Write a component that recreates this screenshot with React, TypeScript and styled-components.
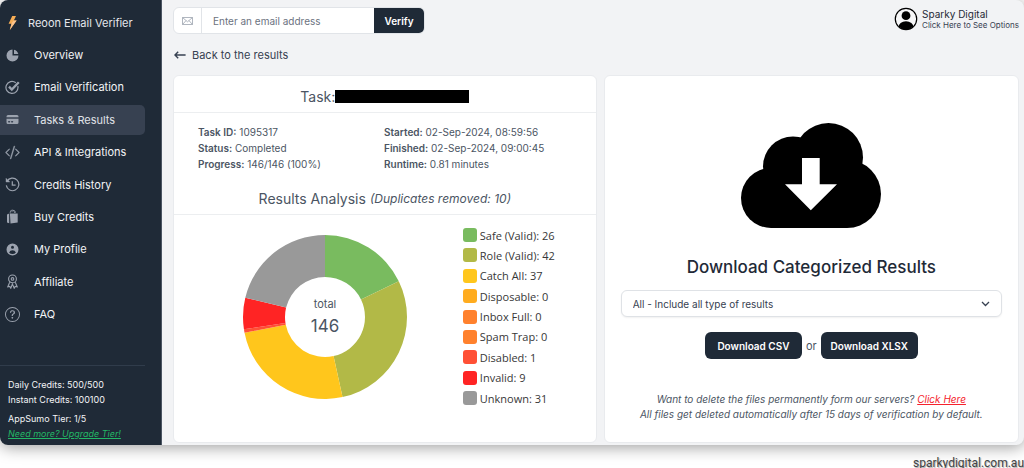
import React from 'react';
import styled, { createGlobalStyle } from 'styled-components';
import { HiChartPie, HiCreditCard, HiUserCircle } from 'react-icons/hi';
import { BsCodeSlash, BsQuestionCircle } from 'react-icons/bs';

const INK = '#1f2a37';

const GlobalStyle = createGlobalStyle`
  * { box-sizing: border-box; }
  body { margin: 0; background: #fff; font-family: Inter, "Liberation Sans", sans-serif; color: #4b5563; }
  button, input, select { font-family: inherit; }
  h1, h2, p, ul, dl, dd { margin: 0; padding: 0; }
  a { color: inherit; }
`;

const Page = styled.div`
  min-height: 100vh;
  display: flex;
  flex-direction: column;
`;

const Shell = styled.div`
  flex: 1;
  display: grid;
  grid-template-columns: 162px 1fr;
  background: #f2f3f5;
  border-radius: 8px;
  overflow: hidden;
  box-shadow: 0 2px 16px rgba(0, 0, 0, 0.4);
`;

const Sidebar = styled.aside`
  display: flex;
  flex-direction: column;
  background: ${INK};
  color: #e5e7eb;
  border-right: 1px solid #4b5563;
`;

const Brand = styled.div`
  display: flex;
  align-items: center;
  gap: 11px;
  height: 40px;
  padding: 5px 0 0 8px;
  font-size: 11px;
  white-space: nowrap;
`;

const Nav = styled.nav`
  flex: 1;
  display: flex;
  flex-direction: column;
  justify-content: space-between;
  padding: 0 16px 36px 0;
`;

const NavLink = styled.a<{ $active?: boolean }>`
  display: flex;
  align-items: center;
  gap: 14px;
  height: 30px;
  padding-left: 5px;
  border-radius: 0 5px 5px 0;
  background: ${(p) => (p.$active ? '#374151' : 'transparent')};
  color: ${(p) => (p.$active ? '#e0e3e8' : '#f3f4f6')};
  font-size: 11px;
  text-decoration: none;
  white-space: nowrap;
  svg { width: 15px; height: 15px; color: #9ca3af; flex: none; }
`;

const Credits = styled.div`
  margin-right: 16px;
  padding: 11px 0 4px 8px;
  border-top: 1px solid #303c4b;
  color: #f3f4f6;
  font-size: 9px;
  line-height: 15px;
  white-space: nowrap;
`;

const Tier = styled.div`
  margin-top: 4px;
`;

const UpgradeLink = styled.a`
  color: #22b866;
  font-style: italic;
`;

const Main = styled.main`
  display: flex;
  flex-direction: column;
  padding: 7px 5px 2px 11px;
`;

const TopBar = styled.header`
  display: flex;
  justify-content: space-between;
  align-items: flex-start;
`;

const VerifyForm = styled.form`
  display: flex;
  height: 27px;
  width: 252px;
  border: 1px solid #e1e4e8;
  border-radius: 6px;
  background: #fff;
  overflow: hidden;
`;

const MailLabel = styled.label`
  display: grid;
  place-items: center;
  width: 28px;
  border-right: 1px solid #e1e4e8;
  color: #9ca3af;
`;

const EmailInput = styled.input`
  flex: 1;
  min-width: 0;
  border: 0;
  padding: 0 11px;
  background: transparent;
  font-size: 10px;
  &::placeholder { color: #6b7280; opacity: 1; }
`;

const VerifyButton = styled.button`
  width: 50px;
  border: 0;
  padding: 0;
  background: ${INK};
  color: #fff;
  font-size: 10px;
  font-weight: 600;
`;

const Account = styled.button`
  display: flex;
  align-items: center;
  gap: 4px;
  border: 0;
  padding: 0;
  background: none;
  color: #374151;
  text-align: left;
`;

const AccountName = styled.span`
  display: block;
  font-size: 10px;
  line-height: 12px;
  color: ${INK};
`;

const AccountHint = styled.span`
  display: block;
  font-size: 8px;
  line-height: 10px;
`;

const BackLink = styled.a`
  display: flex;
  align-items: center;
  gap: 6px;
  align-self: flex-start;
  height: 41px;
  padding-left: 1px;
  color: #374151;
  font-size: 11px;
  text-decoration: none;
`;

const Panels = styled.div`
  flex: 1;
  display: grid;
  grid-template-columns: 51fr 50fr;
  gap: 7px;
`;

const Card = styled.section`
  display: flex;
  flex-direction: column;
  background: #fff;
  border: 1px solid #e9ebee;
  border-radius: 6px;
`;

const CardTitle = styled.h1`
  display: flex;
  justify-content: center;
  align-items: center;
  height: 37px;
  padding-top: 5px;
  border-bottom: 1px solid #eceef0;
  font-size: 14px;
  font-weight: 400;
`;

const Redacted = styled.span`
  width: 134px;
  height: 13px;
  background: #000;
`;

const Facts = styled.dl`
  display: grid;
  grid-template-columns: 186px 1fr;
  padding: 11px 24px 13px;
  font-size: 10px;
  line-height: 16px;
  dt, dd { display: inline; }
  dt { font-weight: 600; }
`;

const Analysis = styled.h2`
  display: flex;
  justify-content: center;
  align-items: center;
  gap: 4px;
  height: 30px;
  padding-bottom: 2px;
  border-bottom: 1px solid #eceef0;
  font-size: 14px;
  font-weight: 400;
  em { font-size: 12px; }
`;

const ChartRow = styled.div`
  display: flex;
  justify-content: center;
  gap: 48px;
  padding: 12px 0 35px 20px;
`;

const Donut = styled.svg`
  width: 180px;
  height: 180px;
  font-family: Inter, sans-serif;
`;

const Legend = styled.ul`
  display: flex;
  flex-direction: column;
  justify-content: space-between;
  padding-bottom: 1px;
  list-style: none;
`;

const LegendItem = styled.li`
  display: flex;
  align-items: center;
  gap: 3px;
  height: 16px;
  color: #373737;
  font-family: "Open Sans", "Noto Sans", sans-serif;
  font-size: 11px;
`;

const Swatch = styled.span<{ $color: string }>`
  width: 14px;
  height: 14px;
  border-radius: 3px;
  background: ${(p) => p.$color};
`;

const DownloadCard = styled(Card)`
  align-items: center;
  padding: 47px 16px 0;
`;

const CloudIcon = styled.svg`
  width: 140px;
  height: 105px;
`;

const DownloadTitle = styled.h2`
  margin: 28px 0 12px;
  color: ${INK};
  font-size: 17px;
  font-weight: 500;
  line-height: 22px;
`;

const SelectBox = styled.div`
  display: grid;
  width: 100%;
  align-items: center;
  svg { grid-area: 1 / 1; justify-self: end; margin-right: 12px; pointer-events: none; }
`;

const CategorySelect = styled.select`
  grid-area: 1 / 1;
  appearance: none;
  width: 100%;
  height: 27px;
  border: 1px solid #dfe2e6;
  border-radius: 6px;
  padding: 0 11px;
  background: #fff;
  color: #374151;
  font-size: 10px;
  box-shadow: 0 1px 2px rgba(0, 0, 0, 0.06);
`;

const Actions = styled.div`
  display: flex;
  align-items: center;
  gap: 4px;
  margin: 15px 0 33px;
  font-size: 11px;
`;

const DownloadButton = styled.button`
  width: 97px;
  height: 27px;
  border: 0;
  border-radius: 6px;
  padding: 0;
  background: ${INK};
  color: #fff;
  font-size: 10px;
  font-weight: 600;
`;

const Note = styled.p`
  font-size: 10px;
  font-style: italic;
  line-height: 15px;
  text-align: center;
  a { color: #f5222d; }
`;

const Credit = styled.footer`
  height: 24px;
  padding-top: 11px;
  position: relative;
  text-align: right;
  color: #444;
  font: 400 12px/14px Roboto, sans-serif;
  text-shadow: 1px 1px 1px #aaa;
`;

const Bolt = () => (
  <svg width="9" height="14" viewBox="0 0 9 14" aria-hidden="true">
    <path d="M4.2 0 H8 L5.8 4.5 H8.6 L1.8 14 L3.4 7.8 H.6 Z" fill="#f6ad55" />
    <path d="M5.8 4.5 H8.6 L1.8 14 L3.9 7 Z" fill="#fbc38d" />
  </svg>
);

const CheckCircle = () => (
  <svg viewBox="0 0 15 15" fill="none" stroke="currentColor" aria-hidden="true">
    <path d="M12.8 6A6 6 0 1 1 10.8 2.8" strokeWidth="1.2" />
    <path d="M4 6.6 L6.8 9.6 L13.8 2.2" strokeWidth="2.3" />
  </svg>
);

const History = () => (
  <svg viewBox="0 0 15 15" fill="none" stroke="currentColor" strokeWidth="1.2" aria-hidden="true">
    <path d="M2 4.4A6.3 6.3 0 1 1 1.3 8.4" />
    <path d="M1 1.2V5H4.8Z" fill="currentColor" strokeWidth="0.4" />
    <path d="M7.3 4.2V8.2H10.6" />
  </svg>
);

const Bags = () => (
  <svg viewBox="0 0 15 15" aria-hidden="true">
    <path d="M5.2 4.3V3.2a2.1 2.1 0 0 1 4.2 0V4M7 3.2V2.4a1.8 1.8 0 0 1 3.2 0V4" fill="none" stroke="currentColor" strokeWidth="0.8" />
    <path d="M2 5.4L4.2 4.6V14.3L2 13.6ZM4.9 4.6H12.7V13.6L5.5 14.5Z" fill="currentColor" />
  </svg>
);

const Award = () => (
  <svg viewBox="0 0 15 15" fill="none" stroke="currentColor" strokeWidth="1.1" aria-hidden="true">
    <circle cx="7.5" cy="4.9" r="3.9" />
    <circle cx="7.5" cy="4.9" r="1.3" />
    <path d="M4.7 8.2L2.8 12.8L4.8 12.4L5.8 14.2L7.4 10L9.2 14.2L10.2 12.4L12.2 12.8L10.3 8.2" />
  </svg>
);

const NAV = [
  { label: 'Overview', icon: <HiChartPie /> },
  { label: 'Email Verification', icon: <CheckCircle /> },
  { label: 'Tasks & Results', icon: <HiCreditCard />, active: true },
  { label: 'API & Integrations', icon: <BsCodeSlash strokeWidth={0.4} /> },
  { label: 'Credits History', icon: <History /> },
  { label: 'Buy Credits', icon: <Bags /> },
  { label: 'My Profile', icon: <HiUserCircle /> },
  { label: 'Affiliate', icon: <Award /> },
  { label: 'FAQ', icon: <BsQuestionCircle /> },
];

const RESULTS = [
  { label: 'Safe (Valid)', value: 26, color: '#79bb5f' },
  { label: 'Role (Valid)', value: 42, color: '#b2b947' },
  { label: 'Catch All', value: 37, color: '#ffc61c' },
  { label: 'Disposable', value: 0, color: '#ffac1f' },
  { label: 'Inbox Full', value: 0, color: '#ff812d' },
  { label: 'Spam Trap', value: 0, color: '#ff812d' },
  { label: 'Disabled', value: 1, color: '#ff5035' },
  { label: 'Invalid', value: 9, color: '#ff2424' },
  { label: 'Unknown', value: 31, color: '#999999' },
];

const TOTAL = RESULTS.reduce((sum, r) => sum + r.value, 0);

function slicePath(from: number, to: number) {
  const at = (turn: number, r: number) => {
    const a = turn * 2 * Math.PI;
    return `${90 + r * Math.sin(a)} ${90 - r * Math.cos(a)}`;
  };
  return `M${at(from, 82)}A82 82 0 0 1 ${at(to, 82)}L${at(to, 40)}A40 40 0 0 0 ${at(from, 40)}Z`;
}

function ResultsChart() {
  let start = 0;
  return (
    <Donut viewBox="0 0 180 180" role="img" aria-label="Results by category">
      {RESULTS.filter((r) => r.value > 0).map((r) => {
        const from = start / TOTAL;
        start += r.value;
        return <path key={r.label} d={slicePath(from, start / TOTAL)} fill={r.color} />;
      })}
      <text x="90" y="81" textAnchor="middle" fontSize="11" fill="#4b5563">total</text>
      <text x="90" y="105" textAnchor="middle" fontSize="17" fill="#4b5563">{TOTAL}</text>
    </Donut>
  );
}

const FACTS = [
  [['Task ID:', '1095317'], ['Status:', 'Completed'], ['Progress:', '146/146 (100%)']],
  [['Started:', '02-Sep-2024, 08:59:56'], ['Finished:', '02-Sep-2024, 09:00:45'], ['Runtime:', '0.81 minutes']],
];

export default function App() {
  return (
    <Page>
      <GlobalStyle />
      <Shell>
        <Sidebar>
          <Brand><Bolt />Reoon Email Verifier</Brand>
          <Nav>
            {NAV.map((item) => (
              <NavLink key={item.label} href="#" $active={item.active}>{item.icon}{item.label}</NavLink>
            ))}
          </Nav>
          <Credits>
            <div>Daily Credits: 500/500</div>
            <div>Instant Credits: 100100</div>
            <Tier>AppSumo Tier: 1/5</Tier>
            <UpgradeLink href="#">Need more? Upgrade Tier!</UpgradeLink>
          </Credits>
        </Sidebar>
        <Main>
          <TopBar>
            <VerifyForm onSubmit={(e) => e.preventDefault()}>
              <MailLabel htmlFor="email" aria-label="Email address">
                <svg width="11" height="8" viewBox="0 0 11 8" fill="none" stroke="currentColor" strokeWidth="0.8">
                  <path d="M.5 .5H10.5V7.5H.5ZM.5 .5L5.5 4.8L10.5 .5M.5 7.5L4 3.6M10.5 7.5L7 3.6" />
                </svg>
              </MailLabel>
              <EmailInput id="email" type="email" placeholder="Enter an email address" />
              <VerifyButton type="submit">Verify</VerifyButton>
            </VerifyForm>
            <Account type="button">
              <svg width="24" height="24" viewBox="0 0 24 24" aria-hidden="true">
                <clipPath id="face"><circle cx="12" cy="12" r="10.5" /></clipPath>
                <circle cx="12" cy="12" r="10.7" fill="#f7f7f8" stroke="#000" strokeWidth="1.2" />
                <g clipPath="url(#face)">
                  <circle cx="12" cy="8.7" r="4.4" />
                  <ellipse cx="12" cy="20.5" rx="7.6" ry="6.3" />
                </g>
              </svg>
              <span>
                <AccountName>Sparky Digital</AccountName>
                <AccountHint>Click Here to See Options</AccountHint>
              </span>
            </Account>
          </TopBar>
          <BackLink href="#">
            <svg width="12" height="8" viewBox="0 0 12 8" fill="none" stroke="currentColor" strokeWidth="1.4" aria-hidden="true">
              <path d="M11.6 4H1M4.2 .8L1 4L4.2 7.2" />
            </svg>
            Back to the results
          </BackLink>
          <Panels>
            <Card>
              <CardTitle>Task:<Redacted /></CardTitle>
              <Facts>
                {FACTS.map((column, i) => (
                  <div key={i}>
                    {column.map(([name, value]) => (
                      <div key={name}><dt>{name}</dt> <dd>{value}</dd></div>
                    ))}
                  </div>
                ))}
              </Facts>
              <Analysis>Results Analysis <em>(Duplicates removed: 10)</em></Analysis>
              <ChartRow>
                <ResultsChart />
                <Legend>
                  {RESULTS.map((r) => (
                    <LegendItem key={r.label}><Swatch $color={r.color} />{r.label}: {r.value}</LegendItem>
                  ))}
                </Legend>
              </ChartRow>
            </Card>
            <DownloadCard>
              <CloudIcon viewBox="0 0 140 105" aria-hidden="true">
                <circle cx="30" cy="75" r="30" />
                <circle cx="52" cy="43.5" r="30" />
                <circle cx="87.5" cy="34.5" r="34.5" />
                <circle cx="106" cy="71" r="34" />
                <path d="M30 105V50H106V105Z" />
                <path d="M61 35H78.7V61.3H96L69.8 87.3L44 61.3H61Z" fill="#fff" />
              </CloudIcon>
              <DownloadTitle>Download Categorized Results</DownloadTitle>
              <SelectBox>
                <CategorySelect aria-label="Result category">
                  <option>All - Include all type of results</option>
                </CategorySelect>
                <svg width="9" height="6" viewBox="0 0 9 6" fill="none" stroke="#374151" strokeWidth="1.3" aria-hidden="true">
                  <path d="M1 1L4.5 4.5L8 1" />
                </svg>
              </SelectBox>
              <Actions>
                <DownloadButton type="button">Download CSV</DownloadButton>
                or
                <DownloadButton type="button">Download XLSX</DownloadButton>
              </Actions>
              <Note>
                Want to delete the files permanently form our servers? <a href="#">Click Here</a>
                <br />
                All files get deleted automatically after 15 days of verification by default.
              </Note>
            </DownloadCard>
          </Panels>
        </Main>
      </Shell>
      <Credit>sparkydigital.com.au</Credit>
    </Page>
  );
}
